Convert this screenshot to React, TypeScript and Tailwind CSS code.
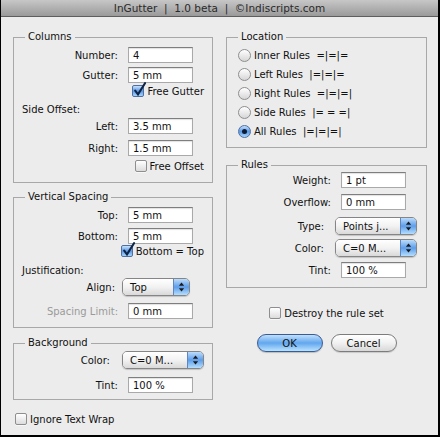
import type { ReactNode } from 'react';

// Classic Aqua-style "InGutter" dialog.

function TextField({ value }: { value: string }) {
  return (
    <div className="flex h-[16px] w-[65px] items-center border border-[#a9a9a9] border-t-[#7e7e7e] bg-white pl-[4px] shadow-[inset_0_1px_1px_rgba(0,0,0,0.12)]">
      {value}
    </div>
  );
}

function Arrows() {
  return (
    <svg width="7" height="10" viewBox="0 0 7 10">
      <path d="M3.5 0.5 L6.2 3.8 H0.8 Z" fill="#1b1b1b" />
      <path d="M0.8 6.2 H6.2 L3.5 9.5 Z" fill="#1b1b1b" />
    </svg>
  );
}

function Select({ value, wide }: { value: string; wide?: boolean }) {
  return (
    <div
      className={
        wide
          ? 'flex h-[18px] w-[82px] overflow-hidden rounded-[5px] border border-[#858585] shadow-[0_1px_1px_rgba(0,0,0,0.18)]'
          : 'flex h-[18px] w-[68px] overflow-hidden rounded-[5px] border border-[#858585] shadow-[0_1px_1px_rgba(0,0,0,0.18)]'
      }
    >
      <div className="flex flex-1 items-center bg-linear-to-b from-white via-[#f2f2f2] to-[#d9d9d9] pl-[7px] whitespace-nowrap">
        {value}
      </div>
      <div className="flex w-[16px] items-center justify-center border-l border-[#5f86c0] bg-linear-to-b from-[#bcdcfb] via-[#5d9de9] to-[#b5defd]">
        <Arrows />
      </div>
    </div>
  );
}

function Checkbox({ checked }: { checked?: boolean }) {
  if (checked) {
    return (
      <span className="relative block h-[12px] w-[12px] shrink-0 rounded-[2px] border border-[#4f6fa3] bg-linear-to-b from-[#c9e3fc] via-[#5a98e3] to-[#a5d4fc]">
        <svg className="absolute -top-[4px] left-[0px]" width="14" height="15" viewBox="0 0 14 15">
          <path d="M2.2 8.6 L5 12.4 L12 1.2" fill="none" stroke="#0f2347" strokeWidth="2.1" strokeLinecap="round" />
        </svg>
      </span>
    );
  }
  return (
    <span className="block h-[12px] w-[12px] shrink-0 rounded-[2px] border border-[#8e8e8e] bg-linear-to-b from-white to-[#dcdcdc] shadow-[0_1px_0_rgba(255,255,255,0.6)]" />
  );
}

function Radio({ checked }: { checked?: boolean }) {
  if (checked) {
    return (
      <span className="flex h-[13px] w-[13px] shrink-0 items-center justify-center rounded-full border border-[#4f6fa3] bg-linear-to-b from-[#c4e0fc] via-[#5a98e3] to-[#a8d6fd]">
        <span className="block h-[5px] w-[5px] rounded-full bg-[#0c1b36]" />
      </span>
    );
  }
  return (
    <span className="block h-[13px] w-[13px] shrink-0 rounded-full border border-[#8e8e8e] bg-linear-to-b from-white to-[#d6d6d6]" />
  );
}

function Group({ title, children, className }: { title: string; children: ReactNode; className: string }) {
  return (
    <fieldset className={className}>
      <legend className="ml-[11px] px-[3px] leading-[12px]">{title}</legend>
      {children}
    </fieldset>
  );
}

function InputRow({ label, value, className, muted }: { label: string; value: string; className: string; muted?: boolean }) {
  return (
    <div className={`flex items-center ${className}`}>
      <span className={muted ? 'w-[114px] pr-[10px] text-right text-[#9a9a9a]' : 'w-[114px] pr-[10px] text-right'}>{label}</span>
      <TextField value={value} />
    </div>
  );
}

function CheckRow({ label, checked, className }: { label: string; checked?: boolean; className: string }) {
  return (
    <div className={`flex h-[12px] items-center justify-end gap-[3px] pr-[8px] ${className}`}>
      <Checkbox checked={checked} />
      <span>{label}</span>
    </div>
  );
}

const rules = [
  { label: 'Inner Rules', glyph: '=|=|=' },
  { label: 'Left Rules', glyph: '|=|=|=' },
  { label: 'Right Rules', glyph: '=|=|=|' },
  { label: 'Side Rules', glyph: '|= = =|' },
  { label: 'All Rules', glyph: '|=|=|=|', checked: true },
];

export default function App() {
  return (
    <div className="flex h-[437px] w-[440px] flex-col overflow-hidden border-r-2 border-b-2 border-l border-black bg-[#ececec] font-['DejaVu_Sans',sans-serif] text-[10px] leading-[13px] text-[#111]">
      <div className="flex h-[17px] shrink-0 items-center justify-center border-b border-[#5e5e5e] bg-linear-to-b from-[#c7c7c7] to-[#9a9a9a] text-[10.5px] whitespace-pre text-[#2a2a2a]">
        InGutter  |  1.0 beta  |  ©Indiscripts.com
      </div>

      <div className="flex gap-[13px] pl-[12px]">
        {/* left column */}
        <div className="flex w-[200px] flex-col">
          <Group title="Columns" className="mt-[14px] border border-[#a8a8a8] pb-[10px]">
            <InputRow label="Number:" value="4" className="mt-[4px]" />
            <InputRow label="Gutter:" value="5 mm" className="mt-[4px]" />
            <CheckRow label="Free Gutter" checked className="mt-[2px]" />
            <div className="mt-[6px] pl-[8px]">Side Offset:</div>
            <InputRow label="Left:" value="3.5 mm" className="mt-[2px]" />
            <InputRow label="Right:" value="1.5 mm" className="mt-[6px]" />
            <CheckRow label="Free Offset" className="mt-[4px]" />
          </Group>

          <Group title="Vertical Spacing" className="mt-[8px] border border-[#a8a8a8] pb-[8px]">
            <InputRow label="Top:" value="5 mm" className="mt-[4px]" />
            <InputRow label="Bottom:" value="5 mm" className="mt-[5px]" />
            <CheckRow label="Bottom = Top" checked className="mt-[1px]" />
            <div className="mt-[7px] pl-[8px]">Justification:</div>
            <div className="mt-[1px] flex items-center">
              <span className="w-[108px] pr-[7px] text-right">Align:</span>
              <Select value="Top" />
            </div>
            <InputRow label="Spacing Limit:" value="0 mm" muted className="mt-[7px]" />
          </Group>

          <Group title="Background" className="mt-[9px] border border-[#a8a8a8] pb-[6px]">
            <div className="mt-[2px] flex items-center">
              <span className="w-[108px] pr-[12px] text-right">Color:</span>
              <Select value="C=0 M..." wide />
            </div>
            <InputRow label="Tint:" value="100 %" className="mt-[8px]" />
          </Group>

          <div className="mt-[13px] flex h-[12px] items-center gap-[3px] pl-[2px]">
            <Checkbox />
            <span>Ignore Text Wrap</span>
          </div>
        </div>

        {/* right column */}
        <div className="flex w-[201px] flex-col">
          <Group title="Location" className="mt-[14px] border border-[#a8a8a8] pb-[6px]">
            <div className="mt-[3px] flex flex-col pl-[11px]">
              {rules.map((r) => (
                <div key={r.label} className="flex h-[19px] items-center gap-[3px]">
                  <Radio checked={r.checked} />
                  <span className="whitespace-pre">{r.label + '  ' + r.glyph}</span>
                </div>
              ))}
            </div>
          </Group>

          <Group title="Rules" className="mt-[11px] border border-[#a8a8a8] pb-[9px]">
            <InputRow label="Weight:" value="1 pt" className="mt-[1px]" />
            <InputRow label="Overflow:" value="0 mm" className="mt-[6px]" />
            <div className="mt-[7px] flex items-center">
              <span className="w-[108px] pr-[11px] text-right">Type:</span>
              <Select value="Points j..." wide />
            </div>
            <div className="mt-[4px] flex items-center">
              <span className="w-[108px] pr-[11px] text-right">Color:</span>
              <Select value="C=0 M..." wide />
            </div>
            <InputRow label="Tint:" value="100 %" className="mt-[5px]" />
          </Group>

          <div className="mt-[19px] flex h-[12px] items-center justify-center gap-[3px]">
            <Checkbox />
            <span>Destroy the rule set</span>
          </div>

          <div className="mt-[15px] flex justify-center gap-[8px]">
            <button className="flex h-[18px] w-[66px] items-center justify-center rounded-full border border-[#3a5b93] bg-linear-to-b from-[#c0e0fc] via-[#62a6ee] to-[#b9e3fe] shadow-[0_1px_1px_rgba(0,0,0,0.2)]">
              OK
            </button>
            <button className="flex h-[18px] w-[66px] items-center justify-center rounded-full border border-[#7c7c7c] bg-linear-to-b from-white via-[#f1f1f1] to-[#d8d8d8] shadow-[0_1px_1px_rgba(0,0,0,0.15)]">
              Cancel
            </button>
          </div>
        </div>
      </div>
    </div>
  );
}
